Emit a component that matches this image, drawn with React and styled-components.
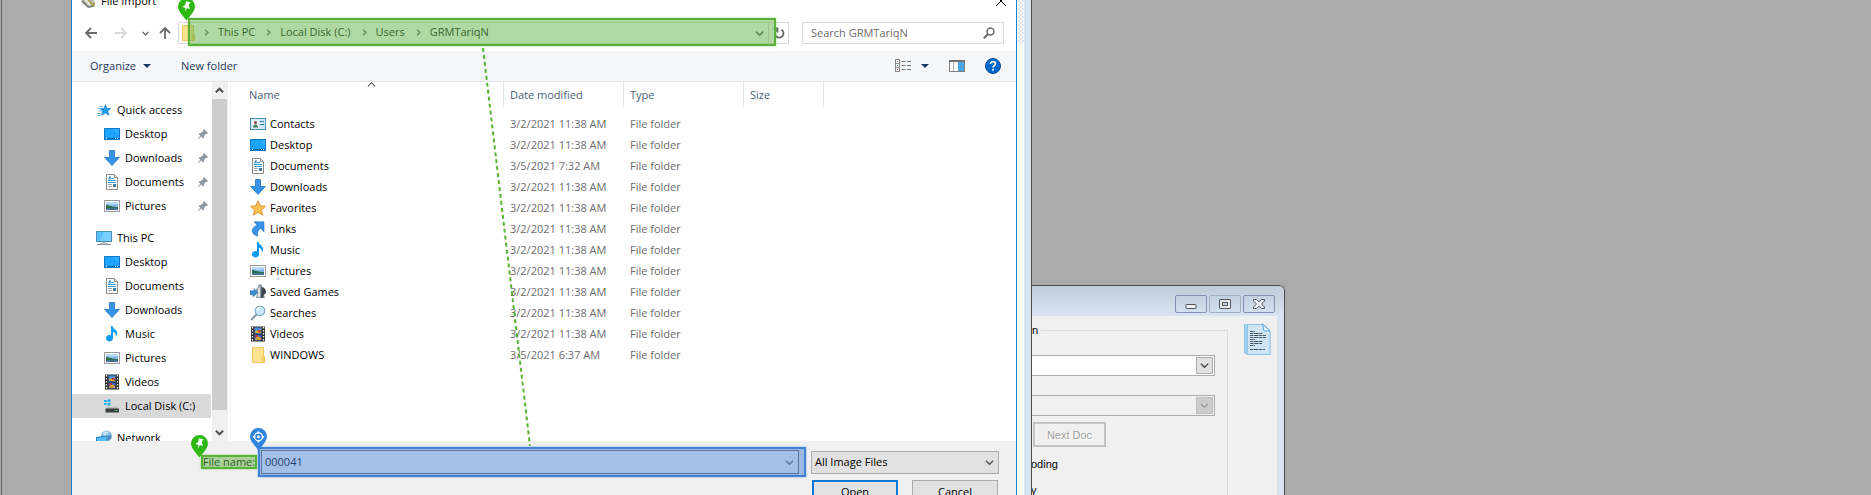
import React from "react";
import styled, { createGlobalStyle } from "styled-components";

const GlobalStyle = createGlobalStyle`
  *, *::before, *::after { box-sizing: border-box; }
  body { margin: 0; overflow: hidden; }
  button, input, select { font: inherit; color: inherit; margin: 0; padding: 0; border: 0; background: none; border-radius: 0; }
  svg { display: block; flex: none; }
  ul, ol { list-style: none; margin: 0; padding: 0; }
`;

const Desktop = styled.main`
  position: relative;
  height: 100vh;
  overflow: hidden;
  background: #ababab;
  color: #000;
  font: 11px/16px "Open Sans", "Noto Sans", sans-serif;
`;

const FrameEdge = styled.div`
  position: absolute;
  inset: 0 auto 0 1px;
  width: 1px;
  background: #646464;
`;

/* ---------- windows behind the dialog ---------- */

const ParentWindow = styled.div`
  position: absolute;
  inset: 0 auto 0 72px;
  width: 960px;
  border-right: 1px solid #4a4a4a;
  background: #d7e4f2;
  padding-right: 7px;
`;

const ParentClient = styled.div`
  height: 100%;
  background: #fff;
`;

const ParentRibbon = styled.div`
  height: 44px;
  background: repeating-conic-gradient(#dde6f8 0 25%, #fff 0 50%) 0 0 / 4px 4px;
`;

const DocWindow = styled.section`
  position: absolute;
  top: 285px;
  left: 1032px;
  width: 253px;
  border: solid #4a4a4a;
  border-width: 1px 1px 0 0;
  border-radius: 0 6px 0 0;
  background: #d7e4f2;
  font: 11px/16px "Liberation Sans", Arial, sans-serif;
`;

const DocTitleBar = styled.header`
  display: flex;
  justify-content: flex-end;
  gap: 2px;
  height: 30px;
  padding: 9px 9px 0 0;
  border-radius: 0 5px 0 0;
  background: linear-gradient(#bfcddb, #d7e4f2);
`;

const CaptionButton = styled.button`
  display: flex;
  align-items: center;
  justify-content: center;
  width: 32px;
  height: 18px;
  border: 1px solid ${(p) => (p.$soft ? "#a3b1c4" : "#8391b3")};
  border-radius: 2px;
  background: linear-gradient(#c2d0df, #d3e0ee);
`;

const DocClient = styled.div`
  display: flex;
  align-items: flex-start;
  gap: 16px;
  margin-right: 7px;
  padding: 7px 6px 0 0;
  background: #f0f0f0;
  overflow: hidden;
`;

const GroupBox = styled.fieldset`
  flex: 1;
  min-width: 0;
  height: 200px;
  margin: 0;
  padding: 18px 12px 0 0;
  border: solid #dcdcdc;
  border-width: 1px 1px 0 0;

  legend { padding: 0 3px 0 0; line-height: 14px; }
`;

const ClassicSelect = styled.span`
  display: flex;
  position: relative;
  height: 21px;
  margin-bottom: ${(p) => p.$gap}px;
  border: solid #abadb3;
  border-width: 1px 1px 1px 0;
  background: ${(p) => (p.$off ? "#f0f0f0" : "#fff")};
  padding: 1px;

  select { flex: 1; appearance: none; min-width: 0; }
`;

const DropBox = styled.span`
  display: flex;
  align-items: center;
  justify-content: center;
  width: 17px;
  border: 1px solid ${(p) => (p.$off ? "#bfbfbf" : "#adadad")};
  background: ${(p) => (p.$off ? "#cccccc" : "#e1e1e1")};
  color: ${(p) => (p.$off ? "#a0a0a0" : "#444")};
`;

const DisabledButton = styled.button`
  display: block;
  width: 73px;
  height: 25px;
  margin: 0 0 9px 1px;
  border: 2px solid #c6c6c6;
  outline: 1px solid #bfbfbf;
  outline-offset: -1px;
  background: #f0f0f0;
  color: #a0a0a0;
  text-shadow: 1px 1px #fff;
`;

const Caption = styled.p`
  margin: 0 0 10px -1px;
`;

/* ---------- dialog ---------- */

const Dialog = styled.section`
  position: absolute;
  top: -13px;
  left: 71px;
  width: 946px;
  border: solid #1883cd;
  border-width: 0 1px;
  background: #fff;
`;

const TitleBar = styled.header`
  display: flex;
  align-items: center;
  gap: 5px;
  height: 28px;
  padding: 0 9px 0 8px;

  h1 { margin: 0; flex: 1; font-size: 11px; font-weight: 400; }
`;

const IconButton = styled.button`
  display: flex;
  align-items: center;
  justify-content: center;
  width: ${(p) => p.$w}px;
  height: 20px;
  flex: none;
  color: ${(p) => p.$color || "#6a6a6a"};
`;

const NavRow = styled.nav`
  display: flex;
  align-items: center;
  height: 36px;
  padding: 0 12px 0 4px;
`;

const Address = styled.div`
  position: relative;
  display: flex;
  align-items: center;
  flex: 1;
  height: 22px;
  margin: 0 13px 0 2px;
  border: 1px solid #d9d9d9;
  padding-left: 1px;
`;

const Crumbs = styled.ol`
  display: flex;
  align-items: center;
  flex: 1;
  padding-bottom: 2px;
  color: #111;

  li { display: flex; align-items: center; height: 16px; }
  li > svg { margin: 0 8px 0 7px; color: #6d6d6d; }
  button { padding-right: 3px; }
`;

const Refresh = styled(IconButton)`
  border-left: 1px solid #d9d9d9;
`;

const SearchBox = styled.div`
  display: flex;
  align-items: center;
  width: 202px;
  height: 22px;
  padding-left: 8px;
  border: 1px solid #d9d9d9;

  input { flex: 1; min-width: 0; outline: 0; }
  input::placeholder { color: #6d6d6d; opacity: 1; }
`;

const Toolbar = styled.div`
  display: flex;
  align-items: center;
  height: 31px;
  padding: 0 15px 0 18px;
  border-bottom: 1px solid #e5e6e7;
  background: #f5f6f7;
  color: #1e395b;
`;

const ToolButton = styled.button`
  display: flex;
  align-items: center;
  gap: 7px;
  margin-right: 30px;
`;

const ToolEnd = styled.div`
  display: flex;
  align-items: center;
  gap: 20px;
  margin-left: auto;
  
  button { display: flex; align-items: center; gap: 10px; }
`;

const Body = styled.div`
  display: flex;
  height: 359px;
`;

const Tree = styled.ul`
  width: 139px;
  padding-top: 16px;
  overflow: hidden;
`;

const TreeItem = styled.li`
  margin-top: ${(p) => (p.$spaced ? 8 : 0)}px;

  a {
    display: flex;
    align-items: center;
    gap: 5px;
    height: 24px;
    padding: 0 2px 0 ${(p) => (p.$root ? 24 : 32)}px;
    background: ${(p) => (p.$selected ? "#d9d9d9" : "transparent")};
    color: inherit;
    text-decoration: none;
    white-space: nowrap;
  }
  a > span { flex: 1; }
`;

const ScrollBar = styled.div`
  display: flex;
  flex-direction: column;
  width: 16px;
  margin-left: 1px;
  background: #f0f0f0;

  button { display: flex; align-items: center; justify-content: center; height: 17px; width: 15px; color: #505050; }
`;

const Thumb = styled.div`
  flex: 1;
  width: 15px;
  margin-bottom: 14px;
  background: #cdcdcd;
`;

const FilePane = styled.div`
  flex: 1;
  margin-left: 2px;
  border-left: 1px solid #f5f5f5;
`;

const FileTable = styled.table`
  table-layout: fixed;
  width: 593px;
  border-collapse: separate;
  border-spacing: 0;

  th {
    position: relative;
    height: 25px;
    padding: 0 0 0 6px;
    border-right: 1px solid #e5e5e5;
    color: #4c607a;
    font-weight: 400;
    text-align: left;
  }
  th:first-child { padding-left: 18px; }
  tbody::before { content: ""; display: block; height: 6px; }
  td { height: 21px; padding: 0 0 0 6px; color: #6d6d6d; white-space: nowrap; }
`;

const NameCell = styled.td`
  && { padding-left: 19px; color: #000; }
  div { display: flex; align-items: center; gap: 4px; }
`;

const SortMark = styled.span`
  position: absolute;
  top: -2px;
  left: 50%;
  color: #505050;
`;

const Footer = styled.footer`
  display: flex;
  flex-direction: column;
  gap: 6px;
  height: 80px;
  padding: 9px 17px 0 129px;
  background: #f0f0f0;
`;

const FileRow = styled.div`
  display: flex;
  align-items: center;
`;

const LabelBox = styled.div`
  position: relative;
  width: 56px;
  height: 14px;
  margin-right: 4px;
  line-height: 14px;
  text-align: center;
  white-space: nowrap;
`;

const ComboBox = styled.div`
  position: relative;
  display: flex;
  align-items: center;
  flex: 1;
  height: 24px;
  margin-right: 12px;
  padding-left: 3px;
  border: 1px solid #6a6a6a;
  background: #fff;

  input { flex: 1; outline: 0; }
`;

const TypeSelect = styled.div`
  display: grid;
  align-items: center;
  width: 188px;
  height: 23px;
  border: 1px solid #adadad;
  background: #e1e1e1;

  select, svg { grid-area: 1 / 1; }
  select { appearance: none; padding-left: 3px; height: 21px; }
  svg { justify-self: end; margin-right: 4px; pointer-events: none; color: #505050; }
`;

const Actions = styled.div`
  display: flex;
  justify-content: flex-end;
  gap: 14px;
  padding-right: 1px;
`;

const ActionButton = styled.button`
  width: 86px;
  height: 24px;
  border: ${(p) => (p.$primary ? "2px solid #0078d7" : "1px solid #adadad")};
  background: #e1e1e1;
`;

/* ---------- annotations ---------- */

const Highlight = styled.div`
  position: absolute;
  inset: ${(p) => p.$inset};
  border: 2px solid ${(p) => (p.$blue ? "#3f82d8" : "#59b235")};
  background: ${(p) => (p.$blue ? "rgba(73,127,209,.5)" : "rgba(95,177,69,.5)")};
  box-shadow: 0 0 2px ${(p) => (p.$blue ? "rgba(63,130,216,.6)" : "rgba(89,178,53,.6)")};
  pointer-events: none;
`;

const Marker = styled.span`
  position: absolute;
  bottom: calc(100% - 1px);
  left: -12px;
  pointer-events: none;

  ${Highlight}[data-target] & { left: -10px; bottom: calc(100% - 2px); }
`;

const Connector = styled.svg`
  position: absolute;
  top: 48px;
  left: 482px;
  pointer-events: none;
`;

const PinMarker = () => (
  <svg width="17" height="23" viewBox="0 0 17 23">
    <path d="M8.5 0A8.5 8.5 0 0 0 0 8.5C0 13.500 5 17.500 8.500 22.500 12 17.500 17 13.500 17 8.500A8.500 8.500 0 0 0 8.500 0Z" fill="#2db813" />
    <path d="M8 3.200 12.500 4.300 12 5.400 11.200 5.500 10.800 8.200 12 10 11.800 10.800 8.800 10.200 7 13.500 7.500 9.900 4.700 9.100 5 8.300 6.900 7.200 7.900 4.800 7.500 4.200Z" fill="#fff" />
  </svg>
);

const TargetMarker = () => (
  <svg width="17" height="23" viewBox="0 0 17 23">
    <path d="M8.5 0A8.5 8.5 0 0 0 0 8.5C0 13.500 5 17.500 8.500 22.500 12 17.500 17 13.500 17 8.500A8.500 8.500 0 0 0 8.500 0Z" fill="#2f84e0" />
    <circle cx="8.500" cy="8.800" r="4" fill="none" stroke="#fff" strokeWidth="1.300" />
    <path d="M8.500 3.200v2.300M8.500 12.200v2.300M2.900 8.800h2.300M11.800 8.800h2.300" stroke="#fff" strokeWidth="1.400" />
    <rect x="7.300" y="7.600" width="2.400" height="2.400" fill="#fff" />
  </svg>
);

/* ---------- glyphs ---------- */

const Chevron = ({ dir = "down", size = 9, weight = 1.5 }) => {
  const turn = { down: 0, up: 180, right: -90 }[dir];
  return (
    <svg width={size} height={size} viewBox="0 0 10 10" fill="none" stroke="currentColor" strokeWidth={weight}>
      <path d="M1 3l4 4 4-4" transform={`rotate(${turn} 5 5)`} />
    </svg>
  );
};

const Arrow = ({ turn = 0 }) => (
  <svg width="14" height="14" viewBox="0 0 14 14" fill="none" stroke="currentColor" strokeWidth="1.800">
    <path d="M13 7H2M7 2 2 7l5 5" transform={`rotate(${turn} 7 7)`} />
  </svg>
);

const Triangle = () => (
  <svg width="8" height="4" viewBox="0 0 8 4"><path d="M0 0h8L4 4Z" fill="#1e395b" /></svg>
);

const PushPin = () => (
  <svg width="12" height="12" viewBox="0 0 12 12">
    <path d="M7 1 11 5 9.800 6 9 5.800 7 8 6.800 10 6 10.500 4 8.500 1 11.500.500 11 3.300 7.800 1.500 6 2 5.200 4.200 5 6.200 3 6 2Z" fill="#8d99a5" />
  </svg>
);

const art = {
  quick: (
    <>
      <path d="M9.500 2.500 11 6.500h3.800l-3 2.600 1.100 4.200L9.200 11l-3.700 2.300L6.600 9.200 4 6.500h4Z" fill="#1e9bea" stroke="#1274c4" strokeWidth=".6" />
      <path d="M3.500 4.500H7M1.500 6.500h3.500M2.500 9h3M1 11.500h4M2 13.500h2.500" stroke="#53b5f0" strokeWidth=".9" />
    </>
  ),
  desktop: (
    <>
      <rect x=".5" y="2.500" width="15" height="11" fill="#1aa4fc" stroke="#0d78c8" />
      <path d="M1 12.500h14" stroke="#0b63ad" />
      <path d="M2 12.500h1M11 12.500h1M13 12.500h1" stroke="#fff" />
      <path d="M9 3h6v6Z" fill="#41b5ff" opacity=".6" />
    </>
  ),
  downloads: <path d="M5.500.500h5v7h4.800L8 15.500.700 7.500h4.800Z" fill="#3794e6" stroke="#2173c0" strokeWidth=".8" />,
  documents: (
    <>
      <path d="M2.500.500h8l3 3v12h-11Z" fill="#fff" stroke="#8a8a8a" />
      <path d="M10.500.500v3h3" fill="#e4e4e4" stroke="#8a8a8a" />
      <path d="M4 6.500h8M4 8.500h8M7 4.500h3" stroke="#2e9be0" />
      <path d="M6 2.500 4.500 5.500M6 2.500v3" stroke="#1879c8" />
      <path d="M4 10.500h4M4 12.500h4" stroke="#9aa5ae" />
      <rect x="9" y="10" width="3" height="3" fill="#4a7a9b" />
    </>
  ),
  pictures: (
    <>
      <rect x=".5" y="2.500" width="15" height="11" fill="#fff" stroke="#9a9a9a" />
      <rect x="2" y="4" width="12" height="8" fill="#7cb7e8" />
      <path d="M2 4h12v2L8 7 2 6Z" fill="#b9dbf5" />
      <path d="M2 7c3 0 4 2 12 2v1H2Z" fill="#2e6b4c" />
      <path d="M2 10h12v2H2Z" fill="#3e7391" />
    </>
  ),
  pc: (
    <>
      <rect x=".5" y="1.500" width="15" height="10" fill="#57c0fa" stroke="#4a8db5" />
      <path d="M8 2h7v9H4Z" fill="#86d4fc" opacity=".7" />
      <path d="M6 12.500h4M4 13.500h8" stroke="#b8c3ca" />
      <path d="M1 14.500h14" stroke="#8b9ba5" />
    </>
  ),
  music: <path d="M7 0h1.500c.3 3 5 3.500 4.700 7.500-.1 1.500-.8 2.300-1.500 3 .5-2.800-.7-4-2.700-4.700V12a3.500 3.200 0 1 1-2-2.700Z" fill="#0b9bf0" />,
  videos: (
    <>
      <rect x="1" y=".5" width="14" height="15" fill="#2d2d2d" />
      <path d="M2.500 1v14M13.500 1v14" stroke="#fff" strokeWidth="1.300" strokeDasharray="1.500 1.500" />
      <rect x="4.500" y="1.500" width="7" height="6" fill="#4c8de0" />
      <rect x="4.500" y="8.500" width="7" height="6" fill="#2f62c4" />
      <path d="M5 6c2-3 3 0 6-3v4H5Z" fill="#d8a820" />
      <path d="M8 4h3v2H8Z" fill="#c8402a" />
      <path d="M5 13c1-3 4-3 6-1v2H5Z" fill="#cf9a35" />
      <path d="M5 9h3v2H5Z" fill="#b03a55" />
    </>
  ),
  disk: (
    <>
      <path d="M0 2h2.500v2H0ZM3.500 1.500h3V4h-3ZM0 5h2.500v2H0ZM3.500 5h3v2.500h-3Z" fill="#12aef0" />
      <path d="M3 8.500h10l2 2.500H2Z" fill="#bdbdbd" />
      <rect x="1.500" y="10.500" width="13.500" height="4" rx=".5" fill="#3c3f42" />
      <rect x="11.500" y="12" width="2" height="1" fill="#48e04c" />
    </>
  ),
  network: (
    <>
      <circle cx="10.500" cy="6" r="5.500" fill="#7fb6d9" />
      <path d="M7 2.500c2-2 5-1.500 6 0-1 2-2 1-3 3s-3 0-3-3Z" fill="#c7e0ee" />
      <path d="M12 6c2-1 3 0 3.500 1-.5 2-2 3-3.500 3Z" fill="#4b86b4" />
      <path d="M.500 7.500 11 6v7L.500 14Z" fill="#4fbdf8" stroke="#2b7cb4" />
    </>
  ),
  contacts: (
    <>
      <rect x=".5" y="2.500" width="15" height="11" fill="#cfe8f7" stroke="#4c93b8" />
      <rect x="2" y="4" width="7" height="8" fill="#eaf5fb" />
      <circle cx="5.500" cy="6.500" r="1.500" fill="#7a5038" />
      <path d="M3 11.500c0-4 5-4 5 0Z" fill="#3f7f5c" />
      <path d="M10 5.500h4M10 8.500h4" stroke="#2c7cab" />
    </>
  ),
  favorites: (
    <path d="M8 .8 10.200 5.800 15.500 6.300 11.500 9.900 12.700 15.200 8 12.400 3.300 15.200 4.500 9.900.500 6.300 5.800 5.800Z" fill="#fdc04f" stroke="#e08f35" strokeWidth=".9" />
  ),
  links: <path d="M4 .8h10v10l-3.300-3.300C7.500 9.500 7 12 8 15.200 3.500 14 2 12 2.200 9.500 2.500 7 4.500 5.500 7.200 4Z" fill="#3794e6" stroke="#2173c0" strokeWidth=".6" />,
  games: (
    <>
      <path d="M8 3c0-4 5-3 4 0l2 3c3 1 2 5 0 5l1 3H6l1-4-2-3Z" fill="#8a959c" />
      <path d="M11.500 3c2 0 5 2 4.500 6l-2 1-1 4h-2Z" fill="#3e474d" />
      <path d="M8 4l2-1v10H7.500Z" fill="#dbe1e4" />
      <path d="M4 4.500v2.300H0v4h3v2l4.500-4Z" fill="#3b8cce" stroke="#2369a5" strokeWidth=".5" />
    </>
  ),
  searches: (
    <>
      <path d="M1 15l5.500-5.500" stroke="#8a8f94" strokeWidth="1.800" />
      <circle cx="10" cy="5.800" r="4.800" fill="#c9e8fa" stroke="#7ea3bb" strokeWidth="1.100" />
      <path d="M7 5c.5-2 2-2.800 4-2.500" stroke="#fff" strokeWidth="1.200" fill="none" />
    </>
  ),
  folder: (
    <>
      <path d="M2.500.500h11v9l1 .5v5.500h-12Z" fill="#ffe391" stroke="#eec65a" />
      <path d="M12.500 15.500v-5l2-.5v5.500Z" fill="#f8d36c" stroke="#e8bd4c" strokeWidth=".7" />
    </>
  ),
};

const FileIcon = ({ name }) => (
  <svg width="16" height="16" viewBox="0 0 16 16" fill="none" aria-hidden="true">{art[name]}</svg>
);

const tree = [
  { icon: "quick", label: "Quick access", root: true },
  { icon: "desktop", label: "Desktop", pinned: true },
  { icon: "downloads", label: "Downloads", pinned: true },
  { icon: "documents", label: "Documents", pinned: true },
  { icon: "pictures", label: "Pictures", pinned: true },
  { icon: "pc", label: "This PC", root: true, spaced: true },
  { icon: "desktop", label: "Desktop" },
  { icon: "documents", label: "Documents" },
  { icon: "downloads", label: "Downloads" },
  { icon: "music", label: "Music" },
  { icon: "pictures", label: "Pictures" },
  { icon: "videos", label: "Videos" },
  { icon: "disk", label: "Local Disk (C:)", selected: true },
  { icon: "network", label: "Network", root: true, spaced: true },
];

const files = [
  ["contacts", "Contacts"],
  ["desktop", "Desktop"],
  ["documents", "Documents", "3/5/2021 7:32 AM"],
  ["downloads", "Downloads"],
  ["favorites", "Favorites"],
  ["links", "Links"],
  ["music", "Music"],
  ["pictures", "Pictures"],
  ["games", "Saved Games"],
  ["searches", "Searches"],
  ["videos", "Videos"],
  ["folder", "WINDOWS", "3/5/2021 6:37 AM"],
];

const crumbs = ["This PC", "Local Disk (C:)", "Users", "GRMTariqN"];

function DocumentWindow() {
  return (
    <DocWindow>
      <DocTitleBar>
        <CaptionButton aria-label="Minimize">
          <svg width="12" height="12" viewBox="0 0 12 12"><rect x="1" y="6.500" width="10" height="4" rx=".5" fill="#f2f2f2" stroke="#535666" /></svg>
        </CaptionButton>
        <CaptionButton aria-label="Maximize" $soft>
          <svg width="12" height="10" viewBox="0 0 12 10" fill="#e8ebe8" stroke="#535666"><rect x=".5" y=".5" width="11" height="9" rx=".5" /><rect x="3.500" y="3.500" width="5" height="3" fill="#c8d6e4" /></svg>
        </CaptionButton>
        <CaptionButton aria-label="Close">
          <svg width="12" height="10" viewBox="0 0 12 10"><path d="M.500.500h3L6 2.800 8.500.500h3v1.500L8.500 5l3 3v1.500h-3L6 7.200 3.500 9.500h-3V8l3-3-3-3Z" fill="#f5f5f5" stroke="#535666" /></svg>
        </CaptionButton>
      </DocTitleBar>
      <DocClient>
        <GroupBox>
          <legend>n</legend>
          <ClassicSelect $gap={19}>
            <select aria-label="First option" />
            <DropBox><Chevron weight={1.4} /></DropBox>
          </ClassicSelect>
          <ClassicSelect $gap={6} $off>
            <select aria-label="Second option" disabled />
            <DropBox $off><Chevron weight={1.4} /></DropBox>
          </ClassicSelect>
          <DisabledButton disabled>Next Doc</DisabledButton>
          <Caption>oding</Caption>
          <Caption>y</Caption>
        </GroupBox>
        <svg width="27" height="33" viewBox="0 0 27 33">
          <path d="M.500 1.500h19l6.500 6v24H4L.500 30Z" fill="#a5d2ee" stroke="#8cc4e8" />
          <path d="M3.500 1.500H19l7 7v23H3.500Z" fill="#cfe5f4" stroke="#8cc4e8" />
          <path d="M18.500.800 26 8h-6Z" fill="#f2f9fe" stroke="#5aa9dd" />
          <path d="M6 8.500h5M6 10.500h13M6 12.500h16M6 14.500h16M6 16.500h5M6 18.500h13M6 20.500h12M6 22.500h5M6 26.500h15" stroke="#4c5964" strokeDasharray="3 .6 5 .6" />
        </svg>
      </DocClient>
    </DocWindow>
  );
}

function NavigationRow() {
  return (
    <NavRow aria-label="Location">
      <IconButton $w={30} aria-label="Back"><Arrow /></IconButton>
      <IconButton $w={30} $color="#d8d8d8" aria-label="Forward"><Arrow turn={180} /></IconButton>
      <IconButton $w={18} aria-label="Recent locations"><Chevron size={7} weight={2} /></IconButton>
      <IconButton $w={22} aria-label="Up"><Arrow turn={90} /></IconButton>
      <Address>
        <FileIcon name="folder" />
        <Crumbs>
          {crumbs.map((c) => (
            <li key={c}>
              <Chevron dir="right" size={7} weight={2} />
              <button>{c}</button>
            </li>
          ))}
        </Crumbs>
        <IconButton $w={18} aria-label="Previous locations"><Chevron weight={2} /></IconButton>
        <Refresh $w={20} aria-label="Refresh">
          <svg width="12" height="12" viewBox="0 0 12 12" fill="none" stroke="currentColor" strokeWidth="1.800">
            <path d="M3.200 3.200A4.300 4.300 0 1 0 8.500 2.700M.500 1.500h4v4" />
          </svg>
        </Refresh>
        <Highlight $inset="-5px 12px -3px 9px">
          <Marker><PinMarker /></Marker>
        </Highlight>
      </Address>
      <SearchBox>
        <input type="search" aria-label="Search GRMTariqN" placeholder="Search GRMTariqN" />
        <IconButton $w={28} aria-label="Search">
          <svg width="12" height="12" viewBox="0 0 12 12" fill="none" stroke="currentColor">
            <circle cx="7.500" cy="4.500" r="3.500" strokeWidth="1.500" />
            <path d="M5 7 .800 11.200" strokeWidth="2" />
          </svg>
        </IconButton>
      </SearchBox>
    </NavRow>
  );
}

function CommandBar() {
  return (
    <Toolbar>
      <ToolButton>Organize <Triangle /></ToolButton>
      <ToolButton>New folder</ToolButton>
      <ToolEnd>
        <button aria-label="Change view">
          <svg width="16" height="14" viewBox="0 0 16 14" fill="none">
            <rect x=".5" y=".5" width="4" height="12" fill="#fff" stroke="#8a8a8a" />
            <path d="M1 4.500h3M1 8.500h3" stroke="#8a8a8a" />
            <path d="M2 2.500h1" stroke="#666" /><path d="M2 6.500h1" stroke="#2684d8" /><path d="M2 10.500h1" stroke="#c33" />
            <path d="M6.500 2.500h4m1.500 0h4M6.500 6.500h4m1.500 0h4M6.500 10.500h4m1.500 0h4" stroke="#777" />
          </svg>
          <Triangle />
        </button>
        <button aria-label="Show the preview pane">
          <svg width="16" height="12" viewBox="0 0 16 12" fill="none">
            <rect x=".5" y=".5" width="15" height="11" fill="#fff" stroke="#808080" />
            <path d="M0 1h16" stroke="#707070" strokeWidth="2" />
            <path d="M4.500 2v9" stroke="#b0b0b0" /><rect x="9" y="2" width="6" height="9" fill="#4ba3e8" />
          </svg>
        </button>
        <button aria-label="Get help">
          <svg width="16" height="16" viewBox="0 0 16 16">
            <circle cx="8" cy="8" r="7.500" fill="#0068cc" stroke="#054f96" />
            <path d="M5.500 5.800C5.500 3 10.500 3 10.500 5.800 10.500 7.500 8 7.500 8 9.500" fill="none" stroke="#fff" strokeWidth="1.700" />
            <rect x="7.100" y="10.800" width="1.800" height="1.800" fill="#fff" />
          </svg>
        </button>
      </ToolEnd>
    </Toolbar>
  );
}

export default function App() {
  return (
    <Desktop>
      <GlobalStyle />
      <FrameEdge />
      <ParentWindow>
        <ParentClient><ParentRibbon /></ParentClient>
      </ParentWindow>
      <DocumentWindow />

      <Dialog role="dialog" aria-label="File Import">
        <TitleBar>
          <svg width="16" height="16" viewBox="0 0 16 16">
            <path d="M1 5 6 1l8 5 1 7-6 2-7-5Z" fill="#b9b9b0" />
            <path d="M2 8l6 6 6-1" fill="none" stroke="#77776c" strokeWidth="1.500" />
            <path d="M8 7l5 5 2-2" fill="none" stroke="#a8a13e" strokeWidth="1.500" />
            <path d="M4 5l6 7" stroke="#e9e9e4" strokeWidth="2" />
          </svg>
          <h1>File Import</h1>
          <IconButton $w={12} $color="#000" aria-label="Close">
            <svg width="10" height="10" viewBox="0 0 10 10" stroke="currentColor"><path d="M0 0l10 10M10 0 0 10" /></svg>
          </IconButton>
        </TitleBar>
        <NavigationRow />
        <CommandBar />
        <Body>
          <Tree>
            {tree.map((t, i) => (
              <TreeItem key={i} $root={t.root} $spaced={t.spaced} $selected={t.selected}>
                <a href="#folder">
                  <FileIcon name={t.icon} />
                  <span>{t.label}</span>
                  {t.pinned && <PushPin />}
                </a>
              </TreeItem>
            ))}
          </Tree>
          <ScrollBar>
            <button aria-label="Scroll up"><Chevron dir="up" weight={2.2} /></button>
            <Thumb />
            <button aria-label="Scroll down"><Chevron weight={2.2} /></button>
          </ScrollBar>
          <FilePane>
            <FileTable>
              <colgroup>
                <col width="273" />
                <col width="120" />
                <col width="120" />
                <col width="80" />
              </colgroup>
              <thead>
                <tr>
                  <th>Name<SortMark><Chevron dir="up" weight={1.2} /></SortMark></th>
                  <th>Date modified</th>
                  <th>Type</th>
                  <th>Size</th>
                </tr>
              </thead>
              <tbody>
                {files.map(([icon, name, date = "3/2/2021 11:38 AM"]) => (
                  <tr key={name}>
                    <NameCell><div><FileIcon name={icon} />{name}</div></NameCell>
                    <td>{date}</td>
                    <td>File folder</td>
                    <td />
                  </tr>
                ))}
              </tbody>
            </FileTable>
          </FilePane>
        </Body>
        <Footer>
          <FileRow>
            <LabelBox>
              <label htmlFor="file-name">File name:</label>
              <Highlight $inset="0">
                <Marker><PinMarker /></Marker>
              </Highlight>
            </LabelBox>
            <ComboBox>
              <input id="file-name" type="text" defaultValue="000041" />
              <IconButton $w={18} aria-label="Show file names"><Chevron weight={1.4} /></IconButton>
              <Highlight $blue data-target $inset="-4px -8px -4px -4px">
                <Marker><TargetMarker /></Marker>
              </Highlight>
            </ComboBox>
            <TypeSelect>
              <select aria-label="File type"><option>All Image Files</option></select>
              <Chevron weight={1.4} />
            </TypeSelect>
          </FileRow>
          <Actions>
            <ActionButton $primary>Open</ActionButton>
            <ActionButton>Cancel</ActionButton>
          </Actions>
        </Footer>
      </Dialog>

      <Connector width="50" height="400" aria-hidden="true">
        <line x1="1" y1="0" x2="48" y2="398" stroke="#59b235" strokeWidth="2" strokeDasharray="4 3" />
      </Connector>
    </Desktop>
  );
}
